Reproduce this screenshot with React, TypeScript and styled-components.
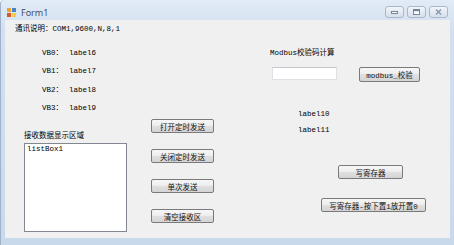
import React from "react";
import styled, { createGlobalStyle } from "styled-components";

const GlobalStyle = createGlobalStyle`
  html, body {
    margin: 0;
    padding: 0;
    background: #ffffff;
  }
  body {
    font-family: "Liberation Mono", "Noto Sans CJK SC", monospace;
    font-size: 7.5px;
    color: #000000;
  }
`;

const Window = styled.div`
  width: 454px;
  height: 245px;
  display: flex;
  flex-direction: column;
  background: linear-gradient(#e2ebf6, #d2e0f0 30px, #c9d9ec);
  border-left: 1px solid #9fb2c9;
  box-sizing: border-box;
  border-top-left-radius: 4px;
`;

const TitleBar = styled.div`
  height: 20px;
  display: flex;
  align-items: center;
  padding: 0 6px 0 6px;
  flex-shrink: 0;
`;

const AppIcon = styled.svg`
  width: 9px;
  height: 9px;
  margin-right: 5px;
  margin-top: 4px;
`;

const Title = styled.span`
  font-family: "Noto Sans", "Liberation Sans", sans-serif;
  font-size: 9px;
  color: #3d4d66;
  margin-top: 4px;
  flex: 1;
`;

const WinButtons = styled.div`
  display: flex;
  gap: 3px;
  margin-top: 4px;
`;

const WinButton = styled.div`
  width: 17px;
  height: 10px;
  border: 1px solid #a9b8ca;
  border-radius: 3px;
  background: linear-gradient(#f3f6fa, #e3eaf2 50%, #d6e0eb);
  display: flex;
  align-items: center;
  justify-content: center;
`;

const ClientWrap = styled.div`
  flex: 1;
  padding: 0 4px 7px 4px;
  display: flex;
`;

const Client = styled.div`
  flex: 1;
  background: #f0f0f0;
  padding-top: 4px;
  display: flex;
  flex-direction: column;
`;

const Header = styled.div`
  line-height: 10px;
  height: 10px;
  padding-left: 10px;
`;

const Body = styled.div`
  display: flex;
  align-items: flex-start;
`;

const LeftCol = styled.div`
  margin-left: 19px;
  width: 103px;
  display: flex;
  flex-direction: column;
`;

const VbList = styled.div`
  margin-top: 14px;
  padding-left: 18px;
  display: flex;
  flex-direction: column;
  gap: 8.4px;
`;

const VbRow = styled.div`
  display: flex;
  line-height: 10px;
  height: 10px;
`;

const VbName = styled.span`
  width: 27px;
`;

const Label = styled.div<{ $mt?: number; $ml?: number }>`
  line-height: 10px;
  height: 10px;
  white-space: nowrap;
  margin-top: ${(p) => p.$mt ?? 0}px;
  margin-left: ${(p) => p.$ml ?? 0}px;
`;

const ListBox = styled.div`
  margin-top: 2px;
  height: 89px;
  box-sizing: border-box;
  border: 1px solid #828790;
  background: #ffffff;
  padding: 0 2px;
  line-height: 10px;
`;

const MidCol = styled.div`
  margin-left: 24px;
  display: flex;
  flex-direction: column;
  padding-top: 85px;
  gap: 16px;
`;

const Button = styled.div<{ $w: number; $h?: number; $mt?: number; $ml?: number }>`
  width: ${(p) => p.$w}px;
  height: ${(p) => p.$h ?? 14}px;
  margin-top: ${(p) => p.$mt ?? 0}px;
  margin-left: ${(p) => p.$ml ?? 0}px;
  box-sizing: border-box;
  border: 1px solid #7a7a7a;
  border-radius: 2px;
  background: linear-gradient(#f6f6f6, #eeeeee 45%, #e0e0e0 50%, #d4d4d4);
  display: flex;
  align-items: center;
  justify-content: center;
  white-space: nowrap;
  color: #111;
  flex-shrink: 0;
`;

const RightCol = styled.div`
  margin-left: 56px;
  display: flex;
  flex-direction: column;
`;

const InputRow = styled.div`
  display: flex;
  align-items: flex-start;
  margin-top: 9px;
`;

const TextBox = styled.div`
  width: 65px;
  height: 13px;
  margin-left: 2px;
  box-sizing: border-box;
  background: #ffffff;
  border: 1px solid #dde1e6;
  border-top-color: #c3c8cf;
`;

const vbItems = [
  ["VB0：", "label6"],
  ["VB1：", "label7"],
  ["VB2：", "label8"],
  ["VB3：", "label9"],
];

export default function App() {
  return (
    <>
      <GlobalStyle />
      <Window>
        <TitleBar>
          <AppIcon viewBox="0 0 9 9">
            <rect x="0" y="0" width="4" height="4" fill="#e8a33a" />
            <rect x="5" y="0" width="4" height="4" fill="#4b83c9" />
            <rect x="0" y="5" width="4" height="4" fill="#d9552c" />
            <rect x="5" y="5" width="4" height="4" fill="#f2c94c" />
          </AppIcon>
          <Title>Form1</Title>
          <WinButtons>
            <WinButton>
              <svg width="7" height="3" viewBox="0 0 7 3">
                <rect x="0.5" y="0.5" width="6" height="2" fill="#fff" stroke="#74869c" />
              </svg>
            </WinButton>
            <WinButton>
              <svg width="7" height="6" viewBox="0 0 7 6">
                <rect x="0.5" y="0.5" width="6" height="5" fill="#fff" stroke="#74869c" />
                <rect x="1" y="1" width="5" height="1.2" fill="#74869c" />
              </svg>
            </WinButton>
            <WinButton>
              <svg width="7" height="6" viewBox="0 0 7 6">
                <path d="M1 0.5 L6 5.5 M6 0.5 L1 5.5" stroke="#8596ab" strokeWidth="1.4" />
              </svg>
            </WinButton>
          </WinButtons>
        </TitleBar>
        <ClientWrap>
          <Client>
            <Header>通讯说明：COM1,9600,N,8,1</Header>
            <Body>
              <LeftCol>
                <VbList>
                  {vbItems.map(([name, value]) => (
                    <VbRow key={name}>
                      <VbName>{name}</VbName>
                      <span>{value}</span>
                    </VbRow>
                  ))}
                </VbList>
                <Label $mt={18}>接收数据显示区域</Label>
                <ListBox>listBox1</ListBox>
              </LeftCol>
              <MidCol>
                <Button $w={63}>打开定时发送</Button>
                <Button $w={63}>关闭定时发送</Button>
                <Button $w={63}>单次发送</Button>
                <Button $w={63}>清空接收区</Button>
              </MidCol>
              <RightCol>
                <Label $mt={14}>Modbus校验码计算</Label>
                <InputRow>
                  <TextBox />
                  <Button $w={61} $h={15} $ml={22}>modbus_校验</Button>
                </InputRow>
                <Label $mt={27} $ml={28}>label10</Label>
                <Label $mt={6} $ml={28}>label11</Label>
                <Button $w={65} $mt={30} $ml={68}>写寄存器</Button>
                <Button $w={105} $mt={19} $ml={51}>写寄存器-按下置1放开置0</Button>
              </RightCol>
            </Body>
          </Client>
        </ClientWrap>
      </Window>
    </>
  );
}
